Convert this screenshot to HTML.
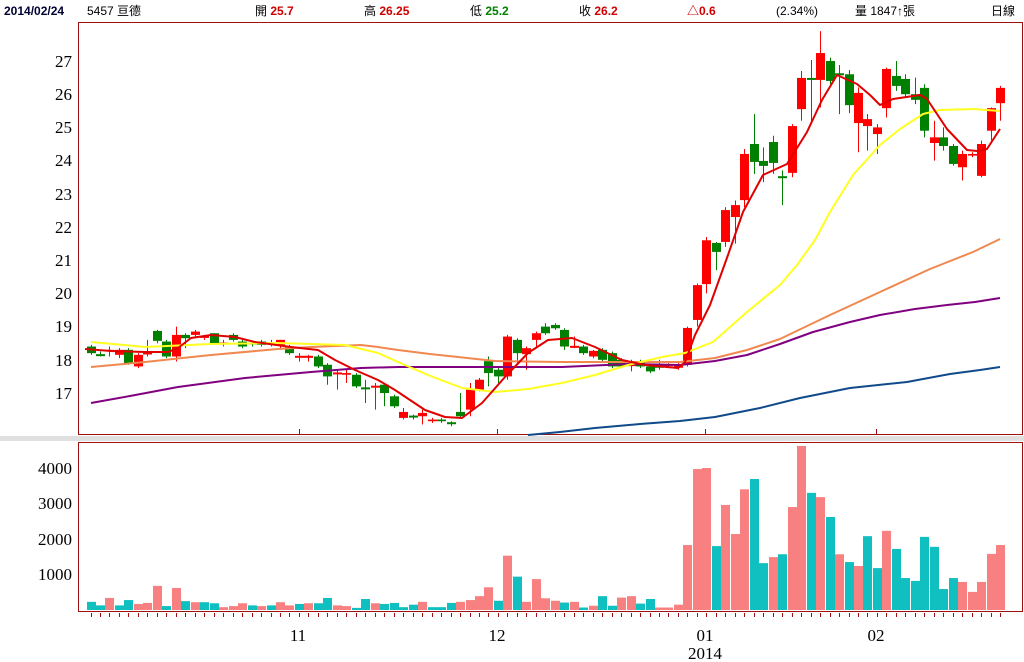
<!DOCTYPE html>
<html><head><meta charset="utf-8">
<style>
html,body{margin:0;padding:0;background:#fff;width:1024px;height:662px;overflow:hidden}
svg{display:block}
.h{font-family:"Liberation Sans","Noto Sans CJK TC",sans-serif;font-size:12px;fill:#000}
.ax{font-family:"Liberation Serif","Noto Serif CJK SC",serif;font-size:17px;fill:#000}
</style></head><body>
<svg id="s" width="1024" height="662" xmlns="http://www.w3.org/2000/svg">
<rect width="1024" height="662" fill="#fff"/>
<text class="h" x="4" y="15" style="font-weight:bold;fill:#000033">2014/02/24</text>
<text class="h" x="87" y="15">5457 亘德</text>
<text class="h" x="255" y="15">開 <tspan style="fill:#d00000;font-weight:bold">25.7</tspan></text>
<text class="h" x="364" y="15">高 <tspan style="fill:#d00000;font-weight:bold">26.25</tspan></text>
<text class="h" x="470" y="15">低 <tspan style="fill:#008000;font-weight:bold">25.2</tspan></text>
<text class="h" x="579" y="15">收 <tspan style="fill:#d00000;font-weight:bold">26.2</tspan></text>
<text class="h" x="687" y="15" style="fill:#d00000;font-weight:bold">△0.6</text>
<text class="h" x="776" y="15">(2.34%)</text>
<text class="h" x="855" y="15">量 1847↑張</text>
<text class="h" x="991" y="15">日線</text>

<rect x="0" y="436" width="1024" height="5" fill="#e0e0e0"/>
<rect x="78.5" y="22.5" width="944" height="412" fill="none" stroke="#a01010" stroke-width="1"/>
<rect x="78.5" y="442.5" width="944" height="169" fill="none" stroke="#a01010" stroke-width="1"/>

<g class="ax" text-anchor="end">
<text x="72" y="67">27</text><text x="72" y="100">26</text><text x="72" y="133">25</text>
<text x="72" y="166">24</text><text x="72" y="200">23</text><text x="72" y="233">22</text>
<text x="72" y="266">21</text><text x="72" y="299">20</text><text x="72" y="332">19</text>
<text x="72" y="366">18</text><text x="72" y="399">17</text>
<text x="72" y="474">4000</text><text x="72" y="509">3000</text>
<text x="72" y="545">2000</text><text x="72" y="580">1000</text>
</g>
<g class="ax" text-anchor="middle">
<text x="298" y="641">11</text><text x="497" y="641">12</text>
<text x="705" y="641">01</text><text x="705" y="659">2014</text>
<text x="876" y="641">02</text>
</g>
<g stroke="#a01010" stroke-width="1">
<line x1="299.5" y1="429" x2="299.5" y2="434"/><line x1="497.5" y1="429" x2="497.5" y2="434"/>
<line x1="705.5" y1="429" x2="705.5" y2="434"/><line x1="876.5" y1="429" x2="876.5" y2="434"/>
</g>
<g id="cd"></g>
<g fill="none" stroke-width="2" stroke-linejoin="round">
<polyline stroke="#104a8a" points="528,435 560,432 595,428 640,424 680,421 715,417 760,408 800,398 850,388 907,382 950,374 980,370 1000,367"/>
<polyline stroke="#800080" points="91,403 130,396 178,387 245,378 311,372 361,368 398,367 462,367 562,367 628,364 680,365 715,361 747,355 780,344 813,332 850,322 880,315 915,309 947,305 975,302 1000,298"/>
<polyline stroke="#f08850" points="91,367 145,362 211,355 278,349 311,347 361,345 378,347 398,350 430,354 495,361 562,362 662,362 680,362 715,358 747,350 780,339 830,315 880,292 930,269 973,252 1000,239"/>
<polyline stroke="#ffff20" points="91,342 145,347 211,344 278,343 345,345 378,353 398,362 428,375 462,388 495,392 528,389 562,383 595,375 628,365 662,357 685,353 713,342 747,312 780,285 797,265 815,240 830,212 853,175 880,145 900,129 923,114 940,110 973,109 1000,111"/>
<polyline stroke="#e00000" points="85,349 111,351 145,352 168,352 178,348 191,338 211,335 235,337 255,342 291,347 318,350 335,360 355,370 378,380 395,390 425,410 445,417 462,418 482,403 505,377 528,353 548,340 572,338 595,347 622,360 645,365 678,368 685,362 695,335 710,305 728,255 743,212 763,175 787,164 807,132 822,100 837,75 848,80 857,84 870,95 880,105 893,99 920,95 927,99 947,129 967,150 977,151 987,149 1000,129"/>
</g>
<g id="vb"></g>
</svg>
<script>
var NS="http://www.w3.org/2000/svg";
function Y(p){return 61+(27-p)*33.2;}
function X(i){return 90.5+9.475*i;}
var C=[
[18.4,18.2,18.45,18.15,'g'],[18.17,18.15,18.25,18.1,'g'],[18.25,18.3,18.4,18.1,'r'],[18.15,18.3,18.35,18.05,'r'],
[18.3,17.9,18.35,17.85,'g'],[17.8,18.15,18.2,17.75,'r'],[18.18,18.22,18.6,18.1,'r'],[18.87,18.57,18.9,18.5,'g'],
[18.55,18.1,18.6,18.05,'g'],[18.1,18.75,19.0,17.95,'r'],[18.75,18.65,18.8,18.35,'g'],[18.75,18.85,18.9,18.7,'r'],
[18.68,18.72,18.75,18.6,'r'],[18.8,18.5,18.8,18.45,'g'],[18.48,18.52,18.6,18.4,'r'],[18.75,18.6,18.8,18.55,'g'],
[18.55,18.4,18.6,18.35,'g'],[18.52,18.48,18.55,18.4,'g'],[18.55,18.45,18.6,18.4,'g'],[18.48,18.52,18.6,18.4,'r'],
[18.45,18.6,18.6,18.35,'r'],[18.4,18.2,18.45,18.15,'g'],[18.08,18.12,18.2,17.95,'r'],[18.08,18.12,18.15,17.95,'r'],
[18.1,17.8,18.15,17.75,'g'],[17.85,17.5,17.9,17.25,'g'],[17.58,17.62,17.7,17.1,'r'],[17.55,17.6,17.7,17.3,'r'],
[17.55,17.2,17.6,17.15,'g'],[17.17,17.13,17.4,16.7,'g'],[17.18,17.22,17.3,16.5,'r'],[17.25,17.0,17.3,16.6,'g'],
[16.9,16.6,16.95,16.55,'g'],[16.25,16.43,16.55,16.2,'r'],[16.32,16.28,16.35,16.2,'g'],[16.3,16.4,16.5,16.05,'r'],
[16.15,16.2,16.25,16.1,'r'],[16.2,16.15,16.25,16.1,'g'],[16.12,16.08,16.15,16.0,'g'],[16.43,16.3,17.0,16.25,'g'],
[16.5,17.1,17.3,16.3,'r'],[17.1,17.4,17.45,17.05,'r'],[17.96,17.6,18.1,17.2,'g'],[17.7,17.5,17.8,17.3,'g'],
[17.5,18.7,18.75,17.4,'r'],[18.6,18.2,18.65,17.9,'g'],[18.17,18.35,18.4,17.7,'r'],[18.6,18.8,18.85,18.4,'r'],
[19.0,18.8,19.1,18.75,'g'],[19.05,18.95,19.1,18.9,'g'],[18.9,18.4,18.95,18.3,'g'],[18.38,18.42,18.7,18.35,'r'],
[18.4,18.2,18.45,18.15,'g'],[18.1,18.27,18.3,18.05,'r'],[18.3,18.0,18.35,17.95,'g'],[18.2,17.8,18.25,17.75,'g'],
[18.0,17.8,18.05,17.75,'g'],[17.83,17.87,18.0,17.65,'r'],[17.95,17.8,18.0,17.75,'g'],[17.8,17.65,17.85,17.6,'g'],
[17.82,17.78,18.0,17.7,'g'],[17.83,17.87,17.9,17.75,'r'],[17.78,17.82,17.9,17.7,'r'],
[17.85,18.96,19.0,17.8,'r'],[19.2,20.25,20.3,19.0,'r'],[20.28,21.6,21.7,20.0,'r'],[21.52,21.25,21.55,20.7,'g'],
[21.55,22.51,22.6,21.4,'r'],[22.3,22.66,22.8,21.5,'r'],[22.81,24.2,24.35,22.6,'r'],[24.5,23.96,25.4,23.6,'g'],
[23.99,23.84,24.4,23.35,'g'],[24.56,23.93,24.75,23.6,'g'],[23.53,23.47,23.7,22.66,'g'],[23.63,25.04,25.1,23.5,'r'],
[25.55,26.49,26.7,25.2,'r'],[26.49,26.43,27.03,25.13,'g'],[26.43,27.24,27.9,25.6,'r'],[27.0,26.4,27.1,26.3,'g'],
[26.63,26.57,26.88,25.4,'g'],[26.6,25.67,26.73,25.43,'g'],[25.13,26.04,26.2,24.25,'r'],[25.04,25.25,25.4,24.3,'r'],
[24.8,25.0,25.1,24.2,'r'],[25.58,26.76,26.8,25.3,'r'],[26.55,26.25,27.0,26.1,'g'],[26.46,26.0,26.6,25.9,'g'],
[26.0,25.83,26.5,25.7,'g'],[26.19,24.9,26.3,24.7,'g'],[24.53,24.7,25.2,24.0,'r'],[24.7,24.44,25.0,24.3,'g'],
[24.44,23.9,24.5,23.85,'g'],[23.8,24.2,24.3,23.4,'r'],[24.15,24.2,24.25,24.1,'r'],[23.54,24.5,24.6,23.5,'r'],
[24.9,25.58,25.6,24.6,'r'],[25.73,26.19,26.25,25.2,'r']
];
var V=[
[230,'t'],[130,'t'],[340,'p'],[130,'t'],[280,'t'],[170,'p'],[200,'p'],[680,'p'],[110,'t'],[620,'p'],[250,'t'],[220,'p'],
[220,'t'],[190,'t'],[80,'p'],[110,'p'],[190,'p'],[130,'t'],[110,'p'],[130,'t'],[220,'p'],[130,'p'],[170,'t'],[190,'p'],
[190,'t'],[340,'t'],[130,'p'],[110,'p'],[60,'t'],[310,'t'],[190,'p'],[170,'t'],[200,'t'],
[80,'t'],[150,'t'],[230,'p'],[80,'t'],[80,'t'],[200,'t'],[230,'p'],[280,'p'],[390,'p'],[640,'p'],[260,'t'],[1530,'p'],
[940,'t'],[230,'p'],[870,'p'],[330,'p'],[260,'p'],[210,'t'],[230,'p'],[70,'t'],[120,'p'],[390,'t'],[120,'t'],[350,'p'],
[390,'p'],[180,'t'],[310,'t'],[70,'p'],[70,'p'],[150,'p'],
[1830,'p'],[3970,'p'],[4000,'p'],[1800,'t'],[2960,'p'],[2140,'p'],[3400,'p'],[3690,'t'],[1320,'t'],[1490,'p'],[1570,'t'],
[2900,'p'],[4620,'p'],[3300,'t'],[3180,'p'],[2620,'t'],[1570,'p'],[1350,'t'],[1240,'p'],[2080,'t'],[1180,'t'],[2230,'p'],
[1720,'t'],[900,'t'],[820,'t'],[2060,'t'],[1780,'t'],[590,'t'],[900,'t'],[790,'p'],[510,'p'],[790,'p'],[1580,'p'],[1830,'p']
];
function el(n,a,p){var e=document.createElementNS(NS,n);for(var k in a)e.setAttribute(k,a[k]);p.appendChild(e);return e;}
var cd=document.getElementById('cd'),vb=document.getElementById('vb');
C.forEach(function(c,i){
 var x=Math.round(X(i)),col=c[4]=='r'?'#ff0000':'#008000';
 var t=Y(Math.max(c[0],c[1])),b=Y(Math.min(c[0],c[1]));if(b-t<1.5){b=t+2;}
 el('line',{x1:x+0.5,x2:x+0.5,y1:Y(c[2]),y2:Y(c[3]),stroke:col,'stroke-width':1},cd);
 el('rect',{x:x-4,y:t,width:9,height:b-t,fill:col},cd);
});
V.forEach(function(v,i){
 var x=Math.round(X(i)),h=v[0]*0.0355;
 el('rect',{x:x-4,y:610-h,width:9,height:h,fill:v[1]=='p'?'#f88080':'#10c0c0'},vb);
 el('line',{x1:x+0.5,x2:x+0.5,y1:613,y2:617,stroke:'#a01010','stroke-width':1},vb);
});
</script>
</body></html>
